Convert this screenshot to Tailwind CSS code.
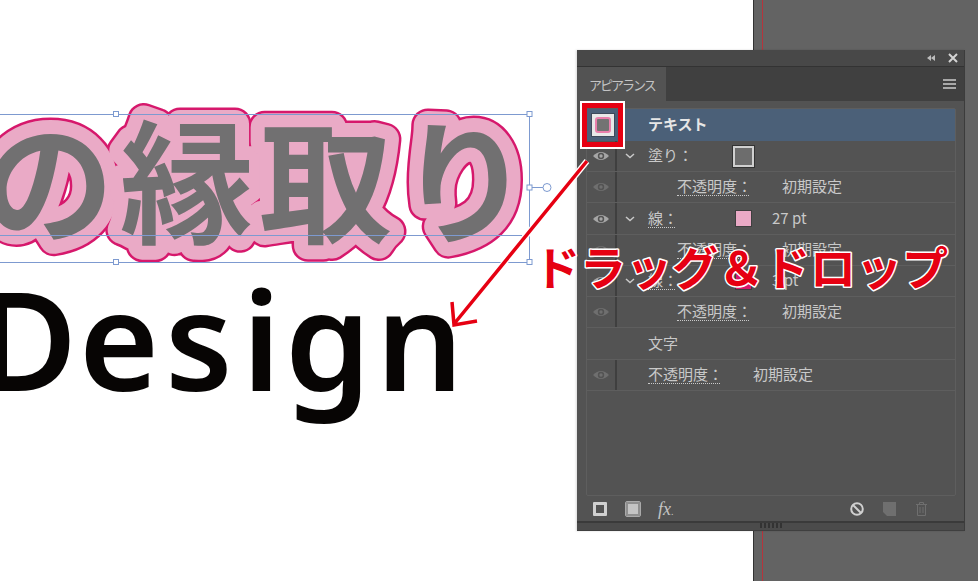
<!DOCTYPE html>
<html lang="ja"><head><meta charset="utf-8">
<script src="https://cdn.jsdelivr.net/npm/@tailwindcss/browser@4"></script>
</head>
<body class="m-0 bg-white">
<div class="relative w-[978px] h-[581px] overflow-hidden flex font-['Noto_Sans_CJK_JP',sans-serif]">
  <div class="w-[753px] h-full bg-white"></div>
  <div class="flex-1 h-full bg-[#636363] border-l border-[#333] flex">
    <div class="ml-[8px] w-px h-full bg-[#b5343c]"></div>
  </div>

  <!-- artwork -->
  <svg class="absolute left-0 top-0" width="978" height="581" viewBox="0 0 978 581">
    <g class="font-['Noto_Sans_CJK_JP'] font-bold text-[133px]" stroke-linejoin="round">
      <text x="-19 120 259 398" y="233" class="fill-[#d6186c] stroke-[#d6186c] stroke-[33px]">の縁取り</text>
      <text x="-19 120 259 398" y="233" class="fill-[#eaaac6] stroke-[#eaaac6] stroke-[28px]">の縁取り</text>
      <text x="-19 120 259 398" y="233" class="fill-[#717071]">の縁取り</text>
    </g>
    <text x="-23 79 165 242 285 376" y="391" class="fill-[#070504] font-['Noto_Sans'] font-semibold text-[137px]">Design</text>
    <g class="fill-none stroke-[#7d9ad0]">
      <path d="M0 114.500H529.500V262.500H0M0 235.500H522M529.500 187.500H543"/>
      <circle cx="547" cy="187.500" r="4" class="fill-white"/>
      <rect x="113.500" y="111.500" width="5" height="5" class="fill-white"/>
      <rect x="113.500" y="259.500" width="5" height="5" class="fill-white"/>
      <rect x="527" y="111.500" width="5" height="5" class="fill-white"/>
      <rect x="527" y="185" width="5" height="5" class="fill-white"/>
      <rect x="527" y="259.500" width="5" height="5" class="fill-white"/>
    </g>
  </svg>

  <!-- appearance panel -->
  <div class="absolute left-[577px] top-[50px] w-[388px] h-[481px] bg-[#535353] flex flex-col text-[15px] leading-none text-[#c9c9c9] border-r border-[#3c3c3c] shadow-[-1px_0_2px_rgba(0,0,0,0.15)]">
    <div class="h-[17px] bg-[#484848] border-b border-[#333] flex items-center justify-end gap-[13px] pr-[6px]">
      <svg width="8" height="6" viewBox="0 0 8 6" class="fill-[#bdbdbd]"><path d="M4 0v6L0 3zM8 0v6L4 3z"/></svg>
      <svg width="10" height="10" viewBox="0 0 10 10" class="stroke-[#d4d4d4] stroke-2"><path d="M1 1l8 8M9 1l-8 8"/></svg>
    </div>
    <div class="h-[34px] flex bg-[#404040]">
      <div class="w-[89px] bg-[#535353] flex items-center pl-[12px] text-[13px] tracking-[-2px] text-[#c4c4c4]">アピアランス</div>
      <div class="flex-1 flex items-center justify-end pr-[8px]">
        <svg width="13" height="10" viewBox="0 0 13 10" class="fill-[#a8a8a8]"><path d="M0 0h13v2H0zM0 4h13v2H0zM0 8h13v2H0z"/></svg>
      </div>
    </div>
    <div class="mx-[9px] mt-[7px] h-[388px] w-[370px] border border-[#5e5e5e] rounded-[2px] flex flex-col">
      <div class="h-[32px] bg-[#4b6078] flex items-center shrink-0">
        <div class="w-[31px] flex justify-center">
          <div class="w-[24px] h-[24px] bg-[#e8e8e8] border border-[#3d4a5a] p-[3px]"><div class="w-full h-full bg-[#737373] border-2 border-[#e87fab] rounded-[3px]"></div></div>
        </div>
        <span class="ml-[30px] pb-[3px] font-bold text-[#e6e6e6]">テキスト</span>
      </div>
      <div class="h-[31px] flex items-center border-b border-[#5e5e5e]">
        <div class="w-[30px] h-full border-r-2 border-[#3f3f3f] flex items-center justify-center">
          <svg width="16" height="10" viewBox="0 0 16 10"><path d="M0 5Q8-3 16 5 8 13 0 5z" class="fill-[#a6a6a6]"/><circle cx="8" cy="5" r="3.200" class="fill-[#535353]"/><circle cx="8" cy="5" r="1.700" class="fill-[#a6a6a6]"/></svg>
        </div>
        <svg class="ml-[8px]" width="10" height="6" viewBox="0 0 10 6"><path d="M1 1l4 3.500L9 1" class="fill-none stroke-[#c9c9c9] stroke-[1.500px]"/></svg>
        <span class="ml-[13px] w-[85px] pb-[3px]">塗り：</span>
        <div class="w-[21px] h-[21px] bg-[#6d6d6d] border-2 border-[#d0d0d0] outline outline-[#333]"></div>
      </div>
      <div class="h-[31px] flex items-center border-b border-[#5e5e5e]">
        <div class="w-[30px] h-full border-r-2 border-[#3f3f3f] flex items-center justify-center">
          <svg width="16" height="10" viewBox="0 0 16 10"><path d="M0 5Q8-3 16 5 8 13 0 5z" class="fill-[#6f6f6f]"/><circle cx="8" cy="5" r="3.200" class="fill-[#535353]"/><circle cx="8" cy="5" r="1.700" class="fill-[#6f6f6f]"/></svg>
        </div>
        <span class="ml-[60px] w-[72px] whitespace-nowrap border-b border-dotted border-[#c9c9c9] pb-[2px]">不透明度：</span>
        <span class="ml-[33px] pb-[3px]">初期設定</span>
      </div>
      <div class="h-[32px] flex items-center border-b border-[#5e5e5e]">
        <div class="w-[30px] h-full border-r-2 border-[#3f3f3f] flex items-center justify-center">
          <svg width="16" height="10" viewBox="0 0 16 10"><path d="M0 5Q8-3 16 5 8 13 0 5z" class="fill-[#a6a6a6]"/><circle cx="8" cy="5" r="3.200" class="fill-[#535353]"/><circle cx="8" cy="5" r="1.700" class="fill-[#a6a6a6]"/></svg>
        </div>
        <svg class="ml-[8px]" width="10" height="6" viewBox="0 0 10 6"><path d="M1 1l4 3.500L9 1" class="fill-none stroke-[#c9c9c9] stroke-[1.500px]"/></svg>
        <span class="ml-[13px] w-[27px] whitespace-nowrap border-b border-dotted border-[#c9c9c9] pb-[2px]">線：</span>
        <div class="ml-[60px] w-[17px] h-[17px] bg-[#eaaac6] border border-[#3f3f3f]"></div>
        <span class="ml-[20px] pb-[3px]">27 pt</span>
      </div>
      <div class="h-[31px] flex items-center border-b border-[#5e5e5e]">
        <div class="w-[30px] h-full border-r-2 border-[#3f3f3f] flex items-center justify-center">
          <svg width="16" height="10" viewBox="0 0 16 10"><path d="M0 5Q8-3 16 5 8 13 0 5z" class="fill-[#6f6f6f]"/><circle cx="8" cy="5" r="3.200" class="fill-[#535353]"/><circle cx="8" cy="5" r="1.700" class="fill-[#6f6f6f]"/></svg>
        </div>
        <span class="ml-[60px] w-[72px] whitespace-nowrap border-b border-dotted border-[#c9c9c9] pb-[2px]">不透明度：</span>
        <span class="ml-[33px] pb-[3px]">初期設定</span>
      </div>
      <div class="h-[31px] flex items-center border-b border-[#5e5e5e]">
        <div class="w-[30px] h-full border-r-2 border-[#3f3f3f] flex items-center justify-center">
          <svg width="16" height="10" viewBox="0 0 16 10"><path d="M0 5Q8-3 16 5 8 13 0 5z" class="fill-[#a6a6a6]"/><circle cx="8" cy="5" r="3.200" class="fill-[#535353]"/><circle cx="8" cy="5" r="1.700" class="fill-[#a6a6a6]"/></svg>
        </div>
        <svg class="ml-[8px]" width="10" height="6" viewBox="0 0 10 6"><path d="M1 1l4 3.500L9 1" class="fill-none stroke-[#c9c9c9] stroke-[1.500px]"/></svg>
        <span class="ml-[13px] w-[27px] whitespace-nowrap border-b border-dotted border-[#c9c9c9] pb-[2px]">線：</span>
        <div class="ml-[60px] w-[17px] h-[17px] bg-[#d6186c] border border-[#3f3f3f]"></div>
        <span class="ml-[20px] pb-[3px]">3 pt</span>
      </div>
      <div class="h-[31px] flex items-center border-b border-[#5e5e5e]">
        <div class="w-[30px] h-full border-r-2 border-[#3f3f3f] flex items-center justify-center">
          <svg width="16" height="10" viewBox="0 0 16 10"><path d="M0 5Q8-3 16 5 8 13 0 5z" class="fill-[#6f6f6f]"/><circle cx="8" cy="5" r="3.200" class="fill-[#535353]"/><circle cx="8" cy="5" r="1.700" class="fill-[#6f6f6f]"/></svg>
        </div>
        <span class="ml-[60px] w-[72px] whitespace-nowrap border-b border-dotted border-[#c9c9c9] pb-[2px]">不透明度：</span>
        <span class="ml-[33px] pb-[3px]">初期設定</span>
      </div>
      <div class="h-[32px] flex items-center border-b border-[#5e5e5e] pl-[61px]"><span class="pb-[3px]">文字</span></div>
      <div class="h-[31px] flex items-center border-b border-[#5e5e5e]">
        <div class="w-[30px] h-full border-r-2 border-[#3f3f3f] flex items-center justify-center">
          <svg width="16" height="10" viewBox="0 0 16 10"><path d="M0 5Q8-3 16 5 8 13 0 5z" class="fill-[#6f6f6f]"/><circle cx="8" cy="5" r="3.200" class="fill-[#535353]"/><circle cx="8" cy="5" r="1.700" class="fill-[#6f6f6f]"/></svg>
        </div>
        <span class="ml-[31px] w-[72px] whitespace-nowrap border-b border-dotted border-[#c9c9c9] pb-[2px]">不透明度：</span>
        <span class="ml-[33px] pb-[3px]">初期設定</span>
      </div>
    </div>
    <div class="flex-1 flex items-center pl-[16px] pr-[36px]">
      <div class="w-[14px] h-[14px] border-[3px] border-[#d0d0d0] rounded-[1px]"></div>
      <div class="ml-[19px] w-[14px] h-[14px] bg-[#c4c4c4] border-2 border-[#8f8f8f] outline outline-[#aaa] rounded-[1px]"></div>
      <span class="ml-[18px] italic text-[18px] font-['Liberation_Serif'] text-[#c4c4c4]">fx<span class="not-italic text-[10px]">.</span></span>
      <div class="ml-auto flex items-center gap-[19px]">
        <svg width="14" height="14" viewBox="0 0 14 14" class="fill-none stroke-[#d0d0d0] stroke-2"><circle cx="7" cy="7" r="5.800"/><path d="M3 3l8 8"/></svg>
        <svg width="13" height="14" viewBox="0 0 13 14" class="fill-[#6f6f6f]"><path d="M0 0h13v14H4l-4-4z"/></svg>
        <svg width="13" height="14" viewBox="0 0 13 14" class="fill-none stroke-[#6f6f6f]"><path d="M1 2.500h11M4.500 2.500V.5h4v2M2.500 2.500v11h8v-11M5 5v6M8 5v6"/></svg>
      </div>
    </div>
    <div class="h-[10px] bg-[#4b4b4b] border-t-2 border-b border-t-[#3a3a3a] border-b-[#3f3f3f] flex justify-center gap-[2px]">
      <div class="w-[2px] h-[5px] bg-[#333]"></div><div class="w-[2px] h-[5px] bg-[#333]"></div><div class="w-[2px] h-[5px] bg-[#333]"></div><div class="w-[2px] h-[5px] bg-[#333]"></div><div class="w-[2px] h-[5px] bg-[#333]"></div><div class="w-[2px] h-[5px] bg-[#333]"></div>
    </div>
  </div>

  <!-- annotations -->
  <div class="absolute left-[582px] top-[103px] w-[41px] h-[44px] border-[5px] border-[#e60012] ring-2 ring-white"></div>
  <svg class="absolute left-0 top-0" width="978" height="581" viewBox="0 0 978 581">
    <path d="M587 161L456 322" class="fill-none stroke-white stroke-[6px]"/>
    <path d="M587 161L454 324M452 302L454 325L477 321" class="fill-none stroke-[#e60012] stroke-[3.500px]"/>
    <g class="font-['Noto_Sans_CJK_JP'] font-bold text-[46px]" stroke-linejoin="round">
      <text x="534" y="285" class="fill-white stroke-white stroke-[3px]">ドラッグ＆ドロップ</text>
      <text x="534" y="285" class="fill-[#e60012]">ドラッグ＆ドロップ</text>
    </g>
  </svg>
</div>
</body></html>
